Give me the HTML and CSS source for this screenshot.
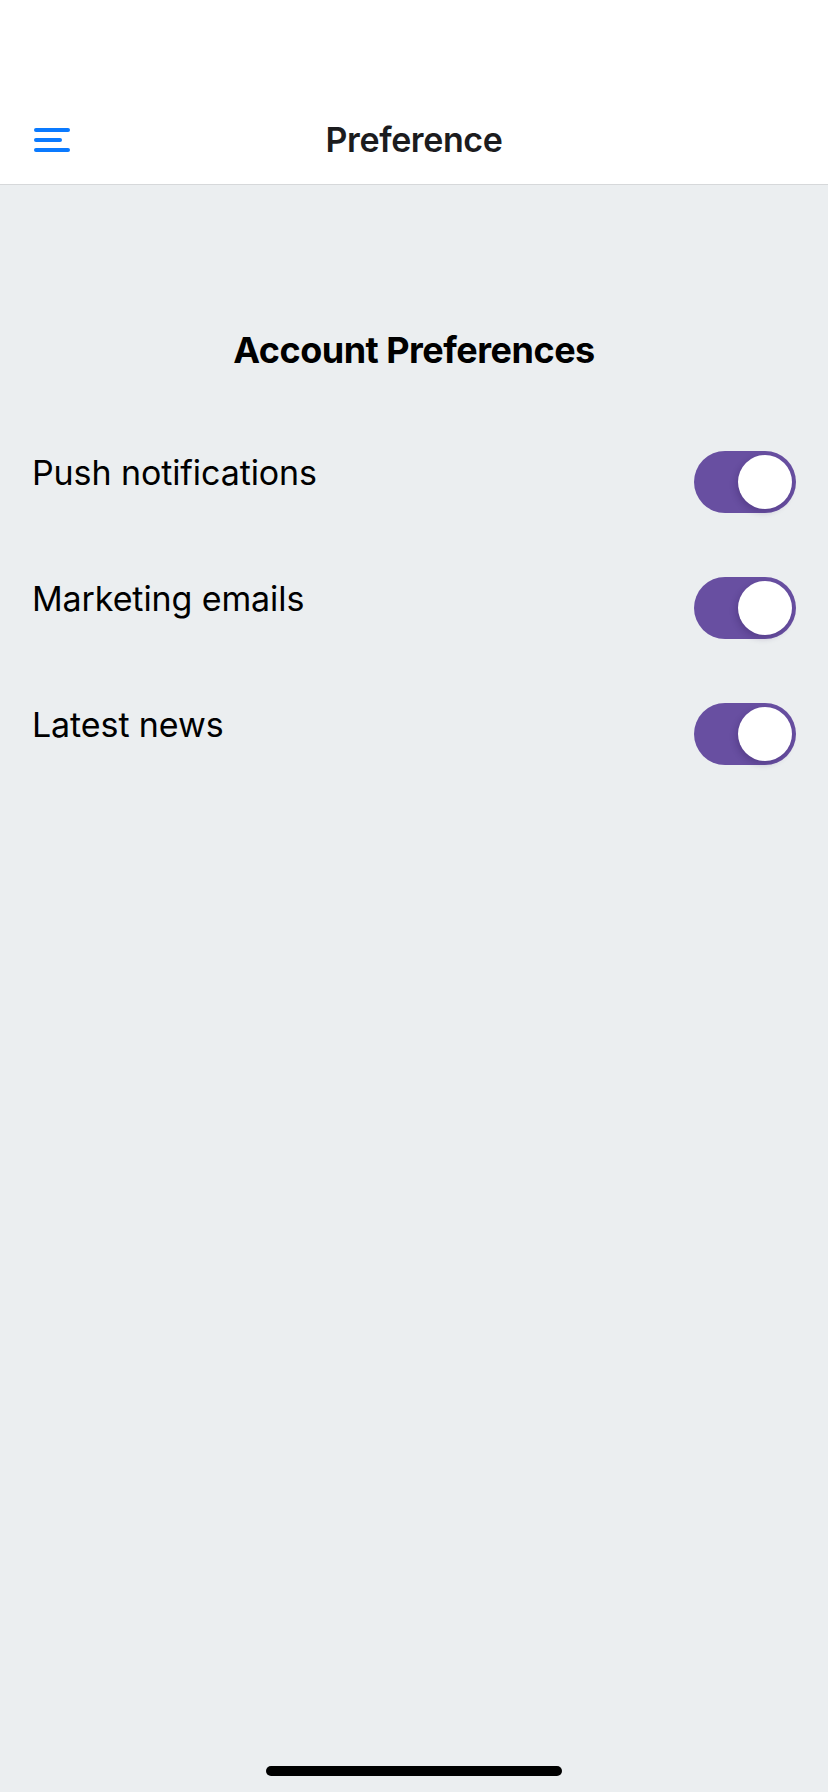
FILE: index.html
```html
<!DOCTYPE html>
<html lang="en">
<head>
<meta charset="utf-8">
<title>Preference</title>
<link rel="stylesheet" href="styles.css">
</head>
<body>
<div class="screen">
  <header class="navbar">
    <button class="menu-btn" aria-label="Menu">
      <svg width="36" height="24" viewBox="0 0 36 24">
        <line x1="2" y1="2" x2="34" y2="2" stroke="#0a7aff" stroke-width="4" stroke-linecap="round"/>
        <line x1="2" y1="12" x2="26" y2="12" stroke="#0a7aff" stroke-width="4" stroke-linecap="round"/>
        <line x1="2" y1="22" x2="34" y2="22" stroke="#0a7aff" stroke-width="4" stroke-linecap="round"/>
      </svg>
    </button>
    <h1 class="nav-title">Preference</h1>
  </header>
  <main class="content">
    <h2 class="section-title">Account Preferences</h2>
    <div class="pref-list">
      <div class="pref-row">
        <span class="pref-label">Push notifications</span>
        <span class="switch on"><span class="knob"></span></span>
      </div>
      <div class="pref-row">
        <span class="pref-label">Marketing emails</span>
        <span class="switch on"><span class="knob"></span></span>
      </div>
      <div class="pref-row">
        <span class="pref-label">Latest news</span>
        <span class="switch on"><span class="knob"></span></span>
      </div>
    </div>
  </main>
  <div class="home-bar"><span class="home-indicator"></span></div>
</div>
</body>
</html>
```

FILE: styles.css
```css
* { box-sizing: border-box; }
html, body {
  margin: 0;
  padding: 0;
  height: 100%;
}
body {
  font-family: Inter, "Noto Sans", sans-serif;
  background: #ebeef0;
  color: #000;
}
.screen {
  width: 828px;
  height: 1792px;
  display: flex;
  flex-direction: column;
  background: #ebeef0;
}
.navbar {
  height: 185px;
  background: #fff;
  border-bottom: 1px solid #d6d8da;
  padding-top: 116px;
  display: grid;
  grid-template-columns: 1fr auto 1fr;
  align-items: start;
  padding-left: 34px;
  padding-right: 34px;
}
.menu-btn {
  border: 0;
  background: none;
  padding: 0;
  margin: 0;
  width: 36px;
  height: 24px;
  margin-top: 12px;
  display: block;
  justify-self: start;
}
.menu-btn svg { display: block; }
.nav-title {
  margin: 0;
  font-size: 34px;
  line-height: 48px;
  font-weight: 600;
  color: #1c1c1e;
  letter-spacing: -0.4px;
}
.content {
  flex: 1;
  padding: 143px 32px 0;
}
.section-title {
  margin: 0;
  text-align: center;
  font-size: 36px;
  line-height: 44px;
  font-weight: 700;
  letter-spacing: -0.5px;
}
.pref-list {
  margin-top: 79px;
  display: flex;
  flex-direction: column;
  gap: 64px;
}
.pref-row {
  display: flex;
  justify-content: space-between;
  align-items: flex-start;
  height: 62px;
}
.pref-label {
  font-size: 34px;
  line-height: 44px;
  font-weight: 400;
  letter-spacing: -0.1px;
}
.switch {
  width: 102px;
  height: 62px;
  border-radius: 31px;
  background: #e5e5ea;
  display: flex;
  align-items: center;
  padding: 0 4px;
}
.switch.on {
  background: #684fa1;
  justify-content: flex-end;
}
.knob {
  width: 54px;
  height: 54px;
  border-radius: 50%;
  background: #fff;
  box-shadow: -2px 3px 6px rgba(40, 20, 80, 0.25);
}
.home-bar {
  height: 50px;
  display: flex;
  justify-content: center;
  padding-top: 24px;
}
.home-indicator {
  width: 296px;
  height: 10px;
  border-radius: 5px;
  background: #000;
}
```
